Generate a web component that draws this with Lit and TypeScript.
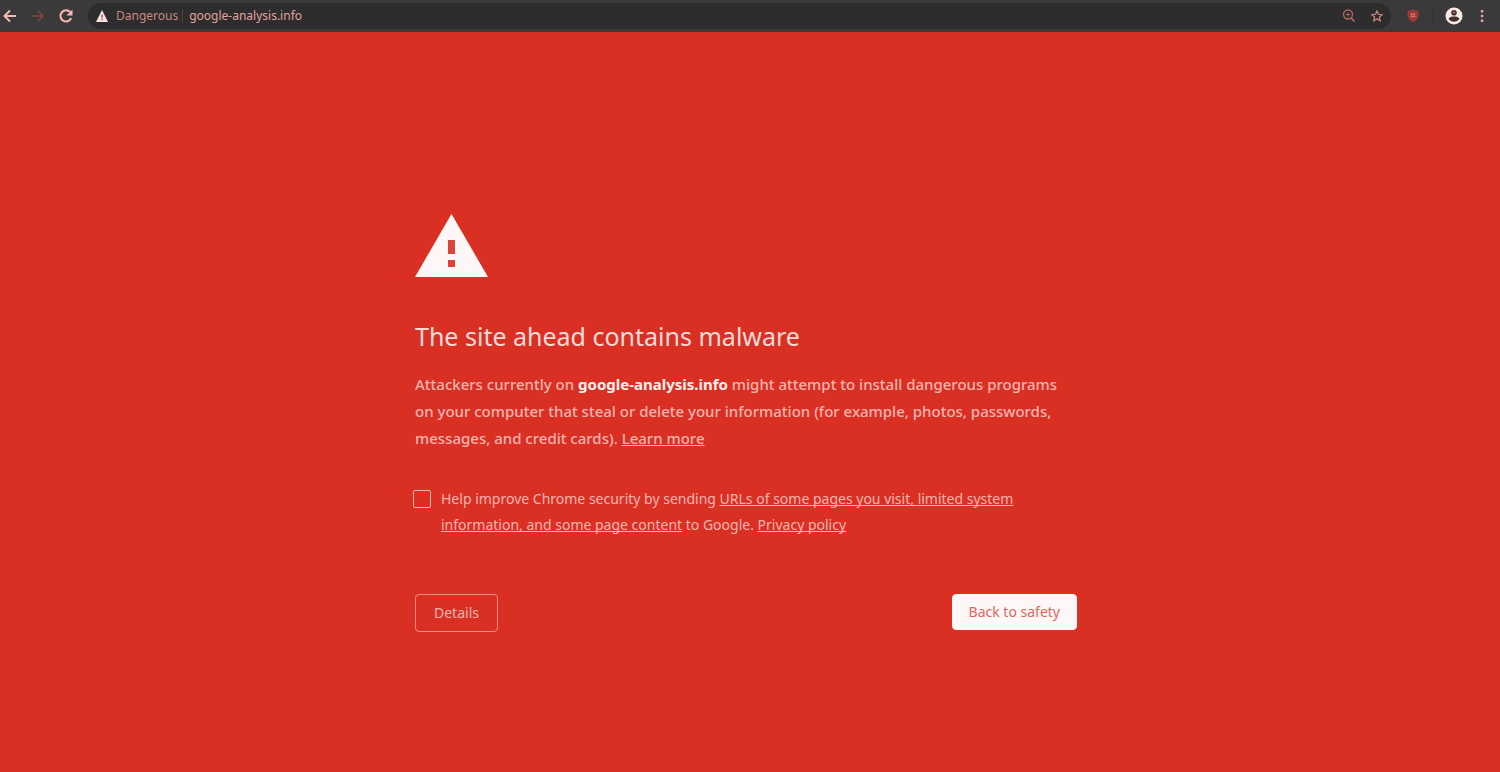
import { LitElement, html, css } from "lit";
import { customElement } from "lit/decorators.js";

@customElement("browser-toolbar")
class BrowserToolbar extends LitElement {
  static styles = css`
    :host {
      display: block;
      font-family: "Noto Sans", sans-serif;
    }
    .bar {
      display: flex;
      align-items: center;
      height: 32px;
      box-sizing: border-box;
      padding: 0 8px 0 0;
      background: #3a3a3a;
      border-bottom: 1px solid #54302d;
    }
    .icon-button {
      display: flex;
      flex: none;
      align-items: center;
      justify-content: center;
      width: 20px;
      height: 20px;
      padding: 0;
      border: 0;
      background: none;
      color: #f4b9b3;
    }
    .nav {
      display: flex;
      gap: 8px;
    }
    .dim {
      color: #83443f;
    }
    .omnibox {
      display: flex;
      flex: 1;
      min-width: 0;
      align-items: center;
      height: 26px;
      box-sizing: border-box;
      margin-left: 12px;
      padding: 0 4px 0 8px;
      border-radius: 13px;
      background: #2d2d2d;
    }
    .status {
      margin-left: 8px;
      color: #c98781;
      font-size: 12px;
      line-height: 16px;
    }
    .separator {
      width: 1px;
      height: 14px;
      margin: 0 6px 0 4px;
      background: #5c3a38;
    }
    .address {
      flex: 1;
      min-width: 0;
      padding: 0;
      border: 0;
      outline: 0;
      background: none;
      color: #e0a39d;
      font: 12px/16px "Noto Sans", sans-serif;
    }
    .actions {
      display: flex;
      gap: 8px;
    }
    .extensions {
      display: flex;
      align-items: center;
      margin-left: 12px;
      gap: 8px;
    }
    .divider {
      width: 1px;
      height: 16px;
      margin: 0 2px;
      background: #303030;
    }
    svg {
      display: block;
    }
  `;

  render() {
    return html`
      <header class="bar">
        <nav class="nav" aria-label="Navigation">
          <button class="icon-button" aria-label="Back">
            <svg width="14" height="14" viewBox="0 0 14 14" fill="none" stroke="currentColor" stroke-width="2">
              <path d="M13 7H2M7 1.5 1.5 7 7 12.5" />
            </svg>
          </button>
          <button class="icon-button dim" aria-label="Forward">
            <svg width="14" height="14" viewBox="0 0 14 14" fill="none" stroke="currentColor" stroke-width="1.5">
              <path d="M1 7h11M7 2l5 5-5 5" />
            </svg>
          </button>
          <button class="icon-button" aria-label="Reload">
            <svg width="14" height="14" viewBox="0 0 14 14" fill="none" stroke="currentColor" stroke-width="2">
              <path d="M12.2 9.2A5.600 5.600 0 1 1 11.3 3.2" />
              <path d="M13.500.5v6H7.500z" fill="currentColor" stroke="none" />
            </svg>
          </button>
        </nav>
        <div class="omnibox">
          <svg width="12" height="12" viewBox="0 0 12 12">
            <path d="M6 0l6 12H0z" fill="#fbe3e0" />
            <path d="M5.3 4.5h1.4v3.2H5.3zM5.3 8.8h1.4v1.4H5.3z" fill="#9b4f49" />
          </svg>
          <span class="status">Dangerous</span>
          <span class="separator"></span>
          <input class="address" aria-label="Address" value="google-analysis.info" />
          <div class="actions">
            <button class="icon-button" aria-label="Zoom">
              <svg width="14" height="14" viewBox="0 0 14 14" fill="none" stroke="#b3665f">
                <circle cx="6" cy="5.5" r="4.5" stroke-width="1.3" />
                <path d="M4 5.5h4M6 3.5v4" />
                <path d="M9.3 9l3.2 3.5" stroke-width="1.8" />
              </svg>
            </button>
            <button class="icon-button" aria-label="Bookmark">
              <svg width="12" height="12" viewBox="0 0 12 12" fill="none" stroke="#d08b84" stroke-width="1.2">
                <path d="M6 1l1.5 3.3 3.6.4-2.7 2.4.8 3.6L6 8.9l-3.2 1.8.8-3.6L.9 4.7l3.6-.4z" />
              </svg>
            </button>
          </div>
        </div>
        <div class="extensions">
          <button class="icon-button" aria-label="Content blocker">
            <svg width="12" height="14" viewBox="0 0 12 14">
              <path d="M6 .5 11.5 2v4.5c0 3-2.4 5.3-5.5 7-3.100-1.700-5.500-4-5.500-7V2z" fill="#9a3a35" />
              <path d="M3.500 5.200h5M3.500 7.500h5M4.800 4v4.600M7.200 4v4.600" stroke="#d5746d" fill="none" />
            </svg>
          </button>
          <span class="divider"></span>
          <button class="icon-button" aria-label="Profile">
            <svg width="18" height="18" viewBox="0 0 18 18">
              <circle cx="9" cy="9" r="8.500" fill="#fbe9e7" />
              <circle cx="9" cy="5.800" r="2.800" fill="#43302f" />
              <path d="M3.500 11.800c1-1.900 3-2.300 5.500-2.300s4.500.4 5.500 2.300c-1.200 2-3.200 3-5.500 3s-4.300-1-5.500-3z" fill="#43302f" />
              <circle cx="9" cy="5.500" r="1" fill="#c98781" />
            </svg>
          </button>
          <button class="icon-button" aria-label="Menu">
            <svg width="4" height="14" viewBox="0 0 4 14" fill="#e0a39d">
              <path d="M.8 1h2.500v2.500H.8zM.8 5.800h2.500v2.500H.8zM.8 10.600h2.500v2.500H.8z" />
            </svg>
          </button>
        </div>
      </header>
    `;
  }
}

@customElement("app-root")
class AppRoot extends LitElement {
  static styles = css`
    :host {
      display: block;
      min-height: 100vh;
      background: #da3024;
      color: #f5b5af;
      font-family: "Noto Sans", sans-serif;
    }
    .page {
      padding: 182px 24px 32px 16px;
    }
    .warning {
      max-width: 662px;
      margin: 0 auto;
    }
    .symbol {
      display: block;
    }
    h1 {
      margin: 39px 0 15px;
      color: #fbdcd9;
      font-size: 25px;
      font-weight: 400;
      line-height: 40px;
    }
    p {
      max-width: 656px;
      margin: 0;
      font-size: 15px;
      font-weight: 500;
      line-height: 27px;
    }
    strong {
      color: #fff0ee;
      font-weight: 700;
    }
    a {
      color: inherit;
      text-decoration: underline;
      text-decoration-skip-ink: none;
    }
    .opt-in {
      display: flex;
      align-items: flex-start;
      gap: 10px;
      margin-top: 34px;
      font-size: 14px;
      line-height: 26px;
    }
    .tick {
      appearance: none;
      flex: none;
      width: 18px;
      height: 18px;
      margin: 4px 0 0 -2px;
      box-sizing: border-box;
      border: 1px solid #f5b5af;
      border-radius: 2px;
    }
    .opt-in-text {
      max-width: 580px;
    }
    .buttons {
      display: flex;
      align-items: flex-start;
      justify-content: space-between;
      margin-top: 56px;
    }
    .button {
      box-sizing: border-box;
      padding: 0 18px;
      border: 1px solid #ee8d86;
      border-radius: 4px;
      background: none;
      color: #f5b5af;
      font: 14px/36px "Noto Sans", sans-serif;
    }
    .primary {
      padding: 0 16px;
      border-color: #fdf8f7;
      background: #fdf8f7;
      color: #e2655c;
      line-height: 34px;
    }
  `;

  render() {
    return html`
      <browser-toolbar></browser-toolbar>
      <main class="page">
        <section class="warning">
          <svg class="symbol" width="73" height="63" viewBox="0 0 73 63" aria-hidden="true">
            <path d="M36.500 0 73 63H0z" fill="#fdf8f7" />
            <path d="M33 26h7v14h-7zM33 46h7v7h-7z" fill="#dc4339" />
          </svg>
          <h1>The site ahead contains malware</h1>
          <p>
            Attackers currently on <strong>google-analysis.info</strong> might attempt to install
            dangerous programs on your computer that steal or delete your information (for example,
            photos, passwords, messages, and credit cards). <a href="#learn">Learn more</a>
          </p>
          <div class="opt-in">
            <input class="tick" id="opt-in" type="checkbox" />
            <label class="opt-in-text" for="opt-in">
              Help improve Chrome security by sending
              <a href="#data">URLs of some pages you visit, limited system information, and some page content</a>
              to Google. <a href="#privacy">Privacy policy</a>
            </label>
          </div>
          <div class="buttons">
            <button class="button">Details</button>
            <button class="button primary">Back to safety</button>
          </div>
        </section>
      </main>
    `;
  }
}
